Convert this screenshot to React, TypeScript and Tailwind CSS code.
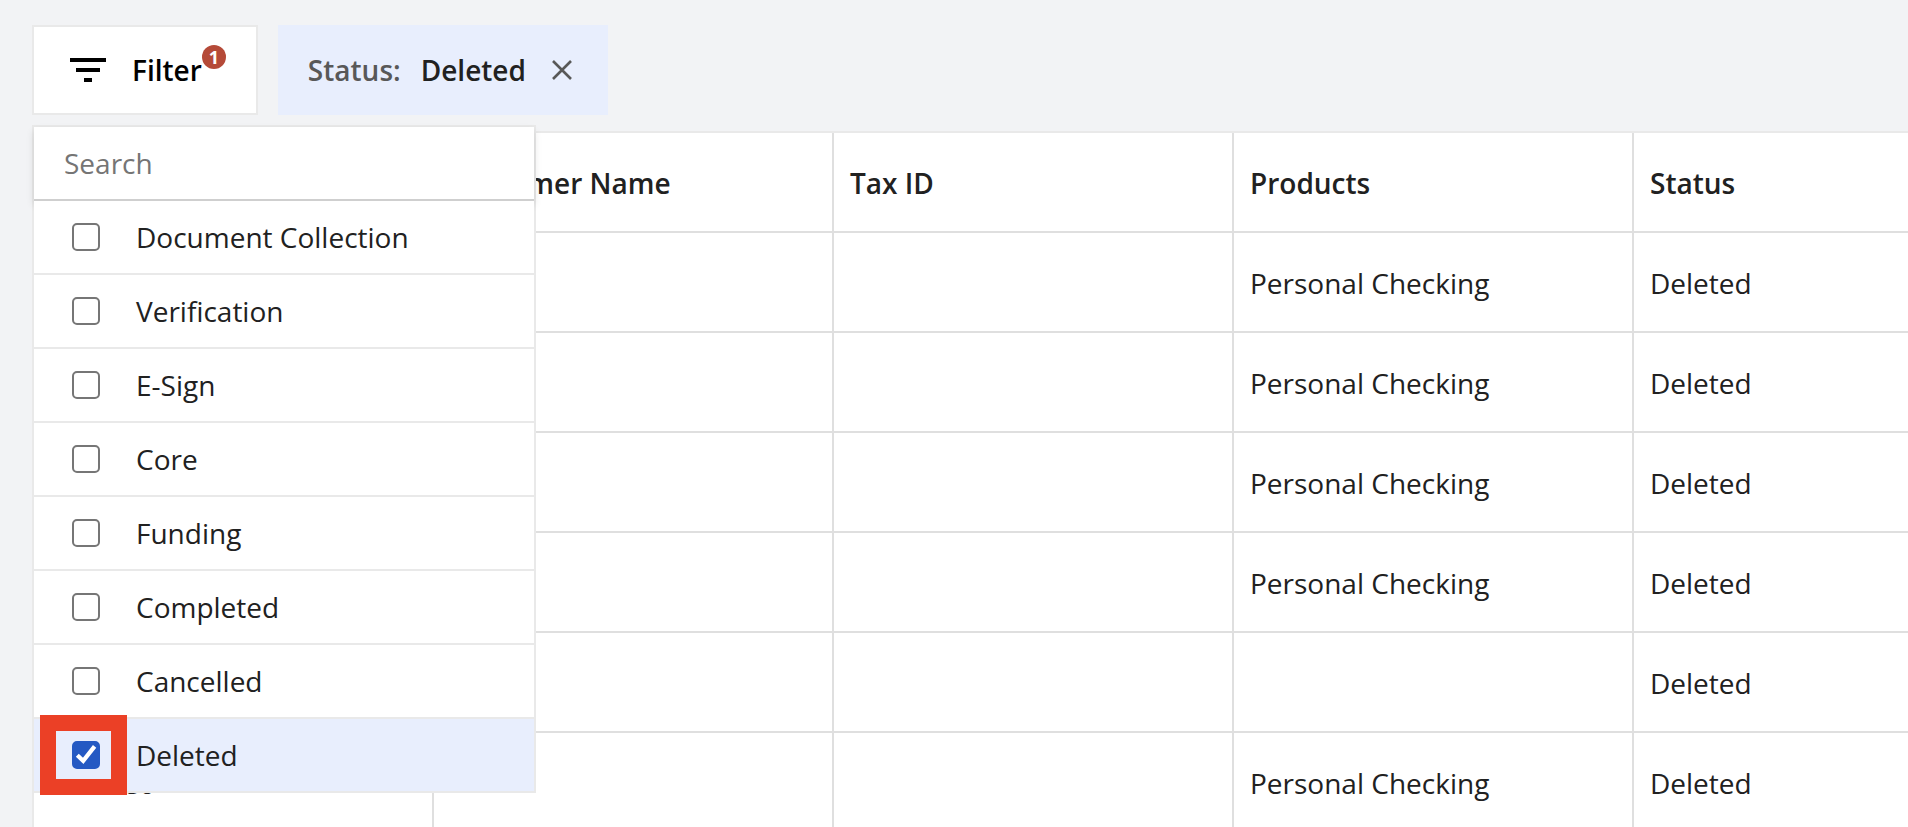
import { useState } from "react";

const statuses = [
  "Document Collection",
  "Verification",
  "E-Sign",
  "Core",
  "Funding",
  "Completed",
  "Cancelled",
  "Deleted",
];

const columns = ["Created", "Customer Name", "Tax ID", "Products", "Status"];

const rows = [
  ["", "", "", "Personal Checking", "Deleted"],
  ["", "", "", "Personal Checking", "Deleted"],
  ["", "", "", "Personal Checking", "Deleted"],
  ["", "", "", "Personal Checking", "Deleted"],
  ["", "", "", "", "Deleted"],
  ["Ana Seo", "", "", "Personal Checking", "Deleted"],
];

function FilterOption({ name, first, checked, onToggle }: { name: string; first: boolean; checked: boolean; onToggle: () => void }) {
  return (
    <li className={first ? "" : "border-t-2 border-[#e9e9e9]"}>
      <label className={`flex h-[72px] items-center pl-[38px] ${checked ? "bg-[#e8eefd]" : "bg-white"}`}>
        <span className="relative flex size-7">
          <input
            type="checkbox"
            checked={checked}
            onChange={onToggle}
            className="size-7 appearance-none rounded-[5px] border-2 border-[#767676] bg-white checked:border-[#2459c3] checked:bg-[#2459c3]"
          />
          {checked && (
            <>
              <svg viewBox="0 0 28 28" className="pointer-events-none absolute inset-0 size-7" fill="none" stroke="#fff" strokeWidth="4.2">
                <path d="M5.3 14.3 L11.2 19.8 L22.6 5.4" strokeLinejoin="miter" />
              </svg>
              <span className="pointer-events-none absolute -top-[26px] -left-8 h-20 w-[87px] border-16 border-[#eb4026]" />
            </>
          )}
        </span>
        <span className="ml-9">{name}</span>
      </label>
    </li>
  );
}

export default function App() {
  const [selected, setSelected] = useState<string[]>(["Deleted"]);
  const toggle = (name: string) =>
    setSelected((now) => (now.includes(name) ? now.filter((s) => s !== name) : [...now, name]));

  return (
    <main className="h-screen overflow-hidden bg-[#f2f3f5] pt-[25px] pl-8 font-['Open_Sans',sans-serif] text-[28px] leading-10 text-[#212121]">
      <div className="relative flex gap-5">
        <button type="button" className="flex h-[90px] items-center border-2 border-[#e9e9e9] bg-white pr-[30px] pl-9 font-semibold text-black">
          <svg viewBox="0 0 36 24" className="h-6 w-9" fill="currentColor">
            <path d="M0 0h36v4H0zM6 10h24v4H6zM14 20h8v4h-8z" />
          </svg>
          <span className="ml-[26px]">Filter</span>
          <span className="mb-[26px] flex size-6 items-center justify-center rounded-full bg-[#b54a38] text-lg leading-6 font-bold text-white">1</span>
        </button>
        <div className="flex h-[90px] items-center bg-[#e8eefd] pr-8 pl-[30px] font-semibold">
          <span className="text-[#585858]">Status:</span>
          <span className="ml-5">Deleted</span>
          <button type="button" aria-label="Remove status filter" className="ml-[22px] p-1 text-[#585858]">
            <svg viewBox="0 0 20 20" className="size-5" fill="none" stroke="currentColor" strokeWidth="2.6">
              <path d="M1 1 L19 19 M19 1 L1 19" />
            </svg>
          </button>
        </div>
        <div className="absolute top-[100px] left-0 z-10 w-[504px] border-2 border-[#e9e9e9] bg-white">
          <div className="border-b-2 border-[#cfcfcf] shadow-[0_4px_8px_rgba(0,0,0,0.12)]">
            <input
              type="text"
              aria-label="Search"
              placeholder="Search"
              className="block h-[72px] w-full px-[30px] outline-none placeholder:text-[#757575]"
            />
          </div>
          <ul className="relative bg-white">
            {statuses.map((name, i) => (
              <FilterOption key={name} name={name} first={i === 0} checked={selected.includes(name)} onToggle={() => toggle(name)} />
            ))}
          </ul>
        </div>
      </div>
      <table className="mt-4 w-full table-fixed border-separate border-spacing-0 border-t-2 border-l-2 border-[#e9e9e9] bg-white">
        <colgroup>
          <col className="w-[400px]" />
          <col className="w-[400px]" />
          <col className="w-[400px]" />
          <col className="w-[400px]" />
          <col />
        </colgroup>
        <thead>
          <tr>
            {columns.map((c) => (
              <th key={c} scope="col" className="h-[100px] border-r-2 border-b-2 border-[#dfdfdf] px-4 pt-0.5 text-left font-semibold last:border-r-0">
                {c}
              </th>
            ))}
          </tr>
        </thead>
        <tbody>
          {rows.map((row, r) => (
            <tr key={r}>
              {row.map((cell, c) => (
                <td key={c} className="h-[100px] border-r-2 border-b-2 border-[#dfdfdf] px-4 pt-0.5 last:border-r-0">
                  {cell}
                </td>
              ))}
            </tr>
          ))}
        </tbody>
      </table>
    </main>
  );
}
